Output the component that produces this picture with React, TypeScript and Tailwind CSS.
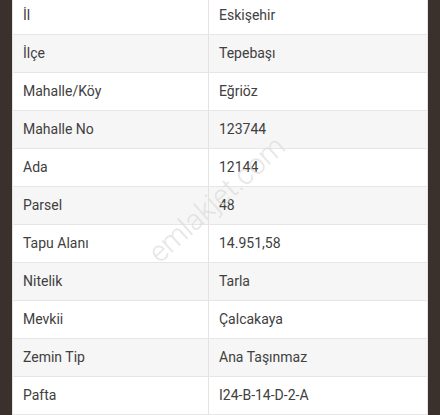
const rows: [string, string][] = [
  ["İl", "Eskişehir"],
  ["İlçe", "Tepebaşı"],
  ["Mahalle/Köy", "Eğriöz"],
  ["Mahalle No", "123744"],
  ["Ada", "12144"],
  ["Parsel", "48"],
  ["Tapu Alanı", "14.951,58"],
  ["Nitelik", "Tarla"],
  ["Mevkii", "Çalcakaya"],
  ["Zemin Tip", "Ana Taşınmaz"],
  ["Pafta", "I24-B-14-D-2-A"],
];

export default function App() {
  return (
    <div className="h-[415px] w-[440px] overflow-hidden bg-[#3a312c] px-[12px] font-['Roboto',sans-serif]">
      <div className="relative -mt-[3px] border-x border-[#e3e3e3] bg-white">
        {rows.map(([label, value], i) => (
          <div
            key={label}
            className={`grid h-[38px] grid-cols-[196px_1fr] border-b border-[#e6e6e6] text-[14px] text-[#404040] ${
              i % 2 === 1 ? "bg-[#f6f6f6]" : "bg-white"
            }`}
          >
            <div className="flex items-center border-r border-[#e3e3e3] pl-[10px]">
              {label}
            </div>
            <div className="flex items-center pl-[10px]">{value}</div>
          </div>
        ))}
        <div
          aria-hidden="true"
          className="pointer-events-none absolute left-[118px] top-[188px] -rotate-[42deg] select-none whitespace-nowrap text-[29px] font-light leading-none text-[#dcdcdc] opacity-70"
        >
          emlakjet.com
        </div>
      </div>
    </div>
  );
}
